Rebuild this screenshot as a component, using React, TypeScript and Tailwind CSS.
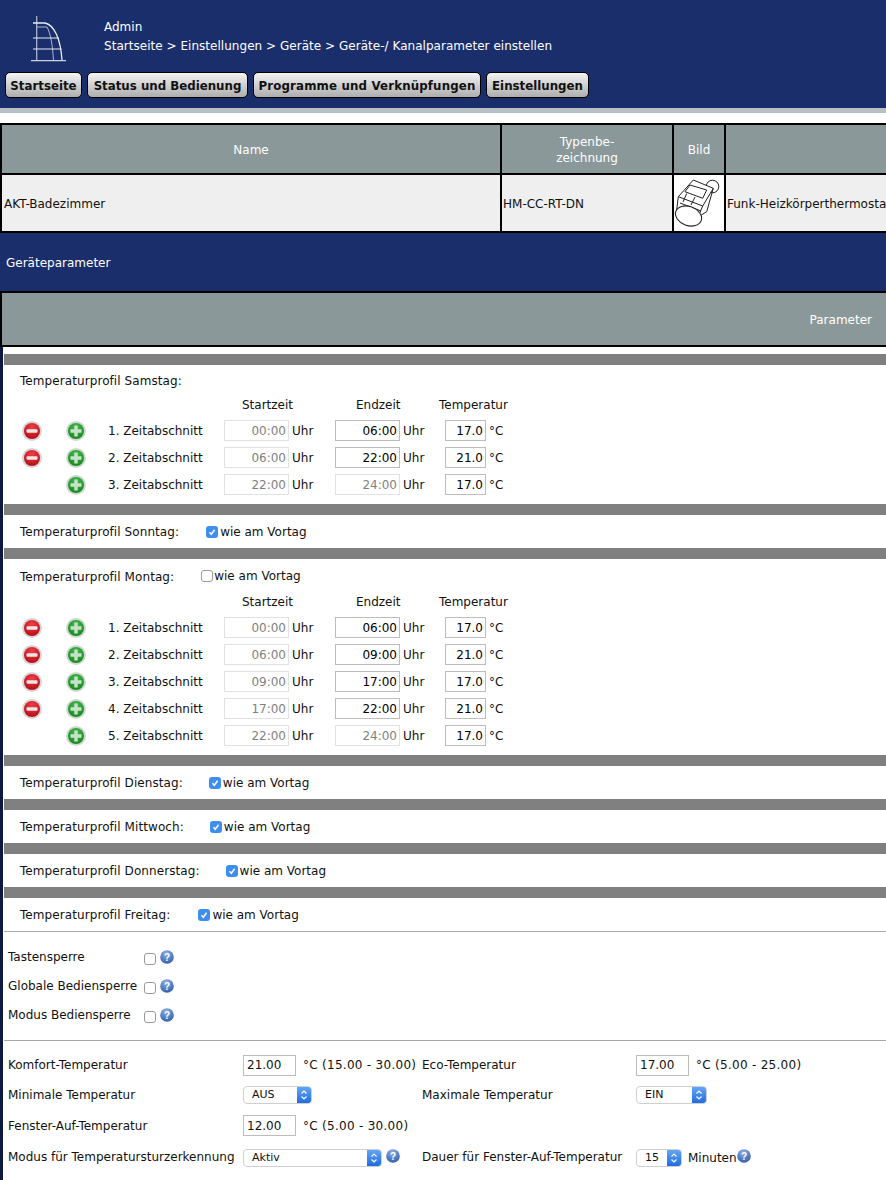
import type { ReactNode } from "react"

const font = "font-['DejaVu_Sans','Liberation_Sans',sans-serif]"

function Logo() {
  return (
    <svg width="44" height="50" viewBox="28 14 44 50" fill="none" stroke="#e8ecf5" className="block">
      <path d="M36.7 16V60" strokeWidth="1.2" opacity="0.75" />
      <path d="M31 60.7H66" strokeWidth="1.3" opacity="0.85" />
      <path d="M33 23H45C54 25 60.500 38 62 60" strokeWidth="1.3" />
      <path d="M37 27H47C50.500 33 52.500 45 53.500 60" strokeWidth="0.9" opacity="0.8" />
      <path d="M33 38H59" strokeWidth="1.1" opacity="0.9" />
      <path d="M33 49H61.500" strokeWidth="1.1" opacity="0.9" />
    </svg>
  )
}

function Thermostat() {
  return (
    <svg width="50" height="56" viewBox="9 5 50 56" fill="none" stroke="#222" strokeWidth="1" className="block">
      <circle cx="47.500" cy="16.500" r="6.300" />
      <path d="M28.300 10L48.300 18.300L37.700 36L33 47L11.700 40L13.300 26.700Z" fill="#fff" />
      <path d="M25 15L41.700 20L37.700 28.300L20 21.700Z" />
      <path d="M13.300 26.700L37.700 36" />
      <path d="M48.300 18.300L41.700 41.700L33 47" />
      <path d="M21.700 23.500L18 32" />
      <path d="M30 27L26 35" />
      <path d="M15 33L36 41" />
      <ellipse cx="23.500" cy="46" rx="13.500" ry="9.500" transform="rotate(20 23.500 46)" fill="#fff" strokeWidth="1.100" />
    </svg>
  )
}

function MinusIcon() {
  return (
    <svg width="22" height="22" viewBox="0 0 22 22" className="block">
      <defs>
        <radialGradient id="redBall" cx="50%" cy="28%" r="75%">
          <stop offset="0%" stopColor="#ee3f48" />
          <stop offset="100%" stopColor="#b50a14" />
        </radialGradient>
      </defs>
      <circle cx="11" cy="11" r="10" fill="#d4d4d4" />
      <circle cx="11" cy="11" r="8" fill="url(#redBall)" />
      <rect x="5.500" y="9.300" width="11" height="3.400" rx="1" fill="#eee6e6" />
    </svg>
  )
}

function PlusIcon() {
  return (
    <svg width="22" height="22" viewBox="0 0 22 22" className="block">
      <defs>
        <radialGradient id="greenBall" cx="50%" cy="28%" r="75%">
          <stop offset="0%" stopColor="#42bb48" />
          <stop offset="100%" stopColor="#14871f" />
        </radialGradient>
      </defs>
      <circle cx="11" cy="11" r="10" fill="#d2d6d2" />
      <circle cx="11" cy="11" r="8" fill="url(#greenBall)" />
      <path d="M9.300 5.500H12.700V9.300H16.500V12.700H12.700V16.500H9.300V12.700H5.500V9.300H9.300Z" fill="#c9e0ca" />
    </svg>
  )
}

function HelpIcon() {
  return (
    <svg width="14" height="14" viewBox="0 0 14 14" className="block">
      <defs>
        <radialGradient id="helpBall" cx="45%" cy="25%" r="80%">
          <stop offset="0%" stopColor="#8fb2e6" />
          <stop offset="100%" stopColor="#2c5aa8" />
        </radialGradient>
      </defs>
      <circle cx="7" cy="7" r="6.800" fill="url(#helpBall)" />
      <text x="7" y="10.500" textAnchor="middle" fontSize="10" fontWeight="700" fill="#fff" fontFamily="Liberation Sans, sans-serif">?</text>
    </svg>
  )
}

function Checkbox({ checked = false }: { checked?: boolean }) {
  if (checked) {
    return (
      <span className="flex h-3 w-3 shrink-0 items-center justify-center rounded-[3px] bg-[#3d8ef0]">
        <svg width="10" height="10" viewBox="0 0 10 10" fill="none" stroke="#fff" strokeWidth="1.500">
          <path d="M2.500 5.200L4.300 7.200L7.600 2.800" />
        </svg>
      </span>
    )
  }
  return <span className="block h-3 w-3 shrink-0 rounded-[3px] border border-[#9a9a9a] bg-white" />
}

function Field({ value, width, muted = false }: { value: string; width: string; muted?: boolean }) {
  return (
    <div className={`${width} flex h-[21px] shrink-0 items-center justify-end border pr-[2px] ${muted ? "border-[#e2e2e2] text-[#7f7f7f]" : "border-[#bdbdbd] text-black"}`}>
      {value}
    </div>
  )
}

function NumberField({ value }: { value: string }) {
  return <div className="flex h-[21px] w-[53px] shrink-0 items-center border border-[#bdbdbd] pl-[3px]">{value}</div>
}

function Dropdown({ value, width }: { value: string; width: string }) {
  return (
    <div className={`${width} flex h-[18px] shrink-0 overflow-hidden rounded-[4px] border border-[#cfcfcf] bg-white text-[11px]`}>
      <span className="flex-1 pl-2 leading-[16px]">{value}</span>
      <span className="flex w-[14px] items-center justify-center bg-gradient-to-b from-[#62a6f5] to-[#1e6ce0]">
        <svg width="8" height="12" viewBox="0 0 8 12" fill="none" stroke="#fff" strokeWidth="1.200">
          <path d="M1.500 4.500L4 2L6.500 4.500" />
          <path d="M1.500 7.500L4 10L6.500 7.500" />
        </svg>
      </span>
    </div>
  )
}

function Bar() {
  return <div className="h-[11px] bg-[#808080]" />
}

type Period = { no: number; start: string; end: string; temp: string; remove: boolean; endFixed?: boolean }

function PeriodRow({ no, start, end, temp, remove, endFixed }: Period) {
  return (
    <div className="flex h-[27px] items-center">
      <div className="flex w-[56px] justify-center">{remove && <MinusIcon />}</div>
      <div className="flex w-[32px] justify-center">
        <PlusIcon />
      </div>
      <div className="w-[132px] pl-[16px]">{no}. Zeitabschnitt</div>
      <Field value={start} width="w-[65px]" muted />
      <div className="w-[46px] pl-[3px]">Uhr</div>
      <Field value={end} width="w-[65px]" muted={endFixed} />
      <div className="w-[45px] pl-[3px]">Uhr</div>
      <Field value={temp} width="w-[41px]" />
      <div className="pl-[3px]">°C</div>
    </div>
  )
}

function Profile({ day, periods, titleH, headH, showCheck }: { day: string; periods: Period[]; titleH: string; headH: string; showCheck?: boolean }) {
  return (
    <div className="pb-[6px]">
      <div className={`${titleH} flex items-center gap-[27px] pl-4`}>
        <span className="tracking-[0.08px]">Temperaturprofil {day}:</span>
        {showCheck && (
          <span className="-mt-[2px] flex items-center gap-[1px]">
            <Checkbox />
            wie am Vortag
          </span>
        )}
      </div>
      <div className={`${headH} flex items-start`}>
        <div className="w-[238px] shrink-0" />
        <div className="w-[114px] shrink-0">Startzeit</div>
        <div className="w-[83px] shrink-0">Endzeit</div>
        <div>Temperatur</div>
      </div>
      <div>
        {periods.map((p) => (
          <PeriodRow key={p.no} {...p} />
        ))}
      </div>
    </div>
  )
}

function SameAsBefore({ day, gap }: { day: string; gap: string }) {
  return (
    <div className="flex h-[33px] items-center pl-4">
      <span className={`${gap} mt-[1px] tracking-[0.08px]`}>Temperaturprofil {day}:</span>
      <span className="flex items-center gap-[2px]">
        <Checkbox checked />
        wie am Vortag
      </span>
    </div>
  )
}

function Lock({ label }: { label: string }) {
  return (
    <div className="flex h-[29px] items-center pl-1">
      <span className="-mt-[2px] w-[136px]">{label}</span>
      <span className="mt-[3px]"><Checkbox /></span>
      <span className="ml-[4px] mt-[-2px]"><HelpIcon /></span>
    </div>
  )
}

function ParamRow({ label, labelW, children }: { label: string; labelW: string; children: ReactNode }) {
  return (
    <div className="flex items-center">
      <span className={`${labelW} shrink-0 whitespace-nowrap`}>{label}</span>
      {children}
    </div>
  )
}

function Range({ children }: { children: string }) {
  return <span className="ml-[7px] whitespace-nowrap tracking-[0.28px]">{children}</span>
}

function Cell({ className, children }: { className: string; children?: ReactNode }) {
  return <div className={`flex shrink-0 items-center ${className}`}>{children}</div>
}

const saturday: Period[] = [
  { no: 1, start: "00:00", end: "06:00", temp: "17.0", remove: true },
  { no: 2, start: "06:00", end: "22:00", temp: "21.0", remove: true },
  { no: 3, start: "22:00", end: "24:00", temp: "17.0", remove: false, endFixed: true },
]

const monday: Period[] = [
  { no: 1, start: "00:00", end: "06:00", temp: "17.0", remove: true },
  { no: 2, start: "06:00", end: "09:00", temp: "21.0", remove: true },
  { no: 3, start: "09:00", end: "17:00", temp: "17.0", remove: true },
  { no: 4, start: "17:00", end: "22:00", temp: "21.0", remove: true },
  { no: 5, start: "22:00", end: "24:00", temp: "17.0", remove: false, endFixed: true },
]

export default function App() {
  return (
    <div className={`${font} h-[1180px] w-[886px] overflow-hidden bg-white text-[12px] leading-[14px] text-[#111]`}>
      {/* Header */}
      <div className="h-[108px] bg-[#1a2e6b] pl-[5px]">
        <div className="flex h-[72px]">
          <div className="w-[99px] pt-[14px]">
            <div className="ml-[23px]"><Logo /></div>
          </div>
          <div className="pt-[20px] text-white">
            <div>Admin</div>
            <div className="mt-[5px] tracking-[0.03px]">Startseite &gt; Einstellungen &gt; Geräte &gt; Geräte-/ Kanalparameter einstellen</div>
          </div>
        </div>
        <div className="flex gap-[5px]">
          {[
            ["Startseite", "w-[77px]"],
            ["Status und Bedienung", "w-[161px]"],
            ["Programme und Verknüpfungen", "w-[228px] tracking-[0.15px]"],
            ["Einstellungen", "w-[103px]"],
          ].map(([label, w]) => (
            <div key={label} className={`${w} flex h-[26px] items-center justify-center rounded-[5px] border border-black bg-gradient-to-b from-[#f4f4f4] to-[#aeaeae] pt-[1px] text-[11.8px] font-bold`}>
              {label}
            </div>
          ))}
        </div>
      </div>
      <div className="h-[5px] bg-[#b7c1c5]" />
      <div className="h-[10px]" />

      {/* Device table */}
      <div className="border-y-2 border-l-2 border-black">
        <div className="flex h-[48px] bg-[#8a9899] text-white">
          <Cell className="w-[498px] justify-center pt-[2px]">Name</Cell>
          <Cell className="w-[172px] justify-center border-l-2 border-black pt-[1px] text-center leading-[16px]">Typenbe-<br />zeichnung</Cell>
          <Cell className="w-[52px] justify-center border-l-2 border-black pt-[2px]">Bild</Cell>
          <Cell className="flex-1 border-l-2 border-black" />
        </div>
        <div className="flex h-[58px] border-t-2 border-black bg-[#efefef]">
          <Cell className="w-[498px] pl-[2px] pt-[2px]">AKT-Badezimmer</Cell>
          <Cell className="w-[172px] border-l-2 border-black pl-[1px] pt-[2px]">HM-CC-RT-DN</Cell>
          <Cell className="w-[52px] border-l-2 border-black bg-white"><Thermostat /></Cell>
          <Cell className="flex-1 overflow-hidden whitespace-nowrap border-l-2 border-black pl-[1px] pt-[2px]">Funk-Heizkörperthermostat</Cell>
        </div>
      </div>

      {/* Device parameters */}
      <div className="flex h-[58px] items-center bg-[#1a2e6b] pl-[6px] pt-[2px] text-white">Geräteparameter</div>

      <div className="border-l-[3px] border-[#0c1a40]">
        <div className="ml-[-3px] border-y-2 border-l-2 border-black">
          <div className="flex h-[52px] items-center justify-end bg-[#8a9899] pr-[14px] pt-[2px] text-white">Parameter</div>
        </div>
        <div className="h-[7px]" />
        <div className="ml-[1px]">
          <Bar />
          <Profile day="Samstag" periods={saturday} titleH="h-[32px]" headH="h-[20px] pt-[1px]" />
          <Bar />
          <SameAsBefore day="Sonntag" gap="mr-[27px]" />
          <Bar />
          <Profile day="Montag" periods={monday} titleH="h-[36px]" headH="h-[19px]" showCheck />
          <Bar />
          <SameAsBefore day="Dienstag" gap="mr-[26px]" />
          <Bar />
          <SameAsBefore day="Mittwoch" gap="mr-[26px]" />
          <Bar />
          <SameAsBefore day="Donnerstag" gap="mr-[26px]" />
          <Bar />
          <SameAsBefore day="Freitag" gap="mr-[28px]" />

          <div className="border-t border-[#a8a8a8] pb-[10px] pt-[11px]">
            <Lock label="Tastensperre" />
            <Lock label="Globale Bediensperre" />
            <Lock label="Modus Bediensperre" />
          </div>

          <div className="border-t border-[#a8a8a8] pl-1 pt-[9px]">
            <div className="grid h-[30px] grid-cols-[414px_1fr] items-center">
              <ParamRow label="Komfort-Temperatur" labelW="w-[235px]">
                <NumberField value="21.00" />
                <Range>°C (15.00 - 30.00)</Range>
              </ParamRow>
              <ParamRow label="Eco-Temperatur" labelW="w-[214px]">
                <NumberField value="17.00" />
                <Range>°C (5.00 - 25.00)</Range>
              </ParamRow>
            </div>
            <div className="grid h-[30px] grid-cols-[414px_1fr] items-center">
              <ParamRow label="Minimale Temperatur" labelW="w-[235px]">
                <Dropdown value="AUS" width="w-[69px]" />
              </ParamRow>
              <ParamRow label="Maximale Temperatur" labelW="w-[214px]">
                <Dropdown value="EIN" width="w-[71px]" />
              </ParamRow>
            </div>
            <div className="grid h-[31px] grid-cols-[414px_1fr] items-center">
              <ParamRow label="Fenster-Auf-Temperatur" labelW="w-[235px]">
                <NumberField value="12.00" />
                <Range>°C (5.00 - 30.00)</Range>
              </ParamRow>
            </div>
            <div className="grid h-[33px] grid-cols-[414px_1fr] items-center">
              <ParamRow label="Modus für Temperatursturzerkennung" labelW="w-[235px] -mt-[2px]">
                <Dropdown value="Aktiv" width="w-[139px]" />
                <span className="ml-[4px] mt-[-4px]"><HelpIcon /></span>
              </ParamRow>
              <ParamRow label="Dauer für Fenster-Auf-Temperatur" labelW="w-[214px] -mt-[2px]">
                <Dropdown value="15" width="w-[46px]" />
                <span className="ml-[6px]">Minuten</span>
                <span className="mt-[-4px]"><HelpIcon /></span>
              </ParamRow>
            </div>
          </div>
          <div className="mt-[6px] border-t border-[#a8a8a8]" />
        </div>
      </div>
    </div>
  )
}
